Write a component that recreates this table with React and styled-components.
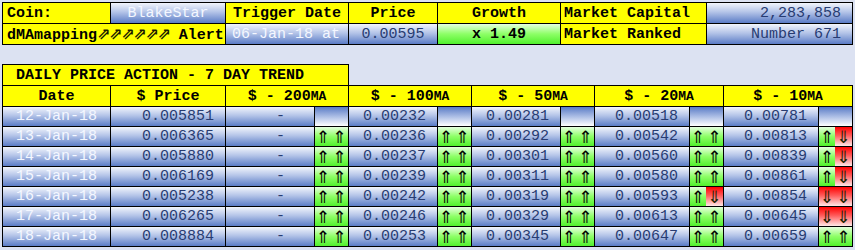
import React from 'react'
import styled, { createGlobalStyle, css } from 'styled-components'

const GlobalStyle = createGlobalStyle`
  body {
    margin: 0;
    background: #dce2f2;
    font-family: "Liberation Mono", "Courier New", monospace;
    font-size: 15px;
  }
`

const tones = {
  yellow: css`background: #ffff00; color: #000;`,
  blue: css`background: linear-gradient(#f2f5fc, #b4c4e8 45%, #5b7cc6);`,
  blueRev: css`background: linear-gradient(#5b7cc6, #b4c4e8 55%, #ffffff);`,
  green: css`background: linear-gradient(#e6ffdf, #8dff66 50%, #52f02e); color: #000;`,
  red: css`background: linear-gradient(#ff0000, #ff5c5c 45%, #ffe8e8);`,
}

const Page = styled.div`
  padding: 2px;
`

const InfoGrid = styled.div`
  display: grid;
  grid-template-columns: 107px 114px 122px 88px 122px 145px 145px;
  grid-auto-rows: 20px;
  gap: 1px;
  padding: 1px;
  background: #000;
  width: max-content;
`

const TrendGrid = styled.div`
  display: grid;
  grid-template-columns: 107px 114px 88px 33px 88px 33px 88px 33px 94px 33px 94px 33px;
  grid-template-rows: 20px;
  grid-auto-rows: 19px;
  gap: 1px;
  padding: 1px;
  background: #000;
  width: max-content;
`

const Cell = styled.div`
  display: flex;
  align-items: center;
  justify-content: ${p => p.$align || 'center'};
  padding: ${p => p.$pad || '0'};
  grid-column: span ${p => p.$span || 1};
  font-weight: ${p => (p.$bold ? 'bold' : 'normal')};
  color: ${p => (p.$light ? '#f4f7ff' : '#283c72')};
  white-space: pre;
  overflow: hidden;
  ${p => tones[p.$tone || 'blue']}
`

const Arrows = styled.span`
  font-family: "DejaVu Sans", sans-serif;
  font-size: 16px;
  font-weight: bold;
  letter-spacing: -1.3px;
  color: #1a1a00;
`

const Small = styled.span`
  font-size: 13px;
`

const Title = styled.div`
  box-sizing: border-box;
  width: 347px;
  height: 21px;
  margin-top: 19px;
  border: 1px solid #000;
  border-bottom: none;
  background: #ffff00;
  padding-left: 13px;
  display: flex;
  align-items: center;
  font-weight: bold;
`

const TrendCell = styled.div`
  display: flex;
`

const Half = styled.div`
  flex: ${p => (p.$first ? '0 0 16px' : '1')};
  display: flex;
  align-items: center;
  justify-content: center;
  font-family: "DejaVu Sans", sans-serif;
  font-size: 17px;
  color: #1c2200;
  ${p => tones[p.$tone]}
`

const rows = [
  ['12-Jan-18', '0.005851', '-', null, '0.00232', null, '0.00281', null, '0.00518', null, '0.00781', null],
  ['13-Jan-18', '0.006365', '-', 'uu', '0.00236', 'uu', '0.00292', 'uu', '0.00542', 'uu', '0.00813', 'ud'],
  ['14-Jan-18', '0.005880', '-', 'uu', '0.00237', 'uu', '0.00301', 'uu', '0.00560', 'uu', '0.00839', 'ud'],
  ['15-Jan-18', '0.006169', '-', 'uu', '0.00239', 'uu', '0.00311', 'uu', '0.00580', 'uu', '0.00861', 'ud'],
  ['16-Jan-18', '0.005238', '-', 'uu', '0.00242', 'uu', '0.00319', 'uu', '0.00593', 'ud', '0.00854', 'dd'],
  ['17-Jan-18', '0.006265', '-', 'uu', '0.00246', 'uu', '0.00329', 'uu', '0.00613', 'uu', '0.00645', 'dd'],
  ['18-Jan-18', '0.008884', '-', 'uu', '0.00253', 'uu', '0.00345', 'uu', '0.00647', 'uu', '0.00659', 'uu'],
]

const Trend = ({ dirs }) => {
  if (!dirs) {
    return <TrendCell><Half $first $tone="blueRev" /><Half $tone="blueRev" /></TrendCell>
  }
  return (
    <TrendCell>
      {dirs.split('').map((d, i) => (
        <Half key={i} $first={i === 0} $tone={d === 'u' ? 'green' : 'red'}>
          {d === 'u' ? '⇑' : '⇓'}
        </Half>
      ))}
    </TrendCell>
  )
}

const headers = ['200', '100', '50', '20', '10']

const App = () => {
  return (
    <Page>
      <GlobalStyle />
      <InfoGrid>
        <Cell $tone="yellow" $bold $align="flex-start" $pad="0 0 0 4px">Coin:</Cell>
        <Cell $light>BlakeStar</Cell>
        <Cell $tone="yellow" $bold>Trigger Date</Cell>
        <Cell $tone="yellow" $bold>Price</Cell>
        <Cell $tone="yellow" $bold>Growth</Cell>
        <Cell $tone="yellow" $bold $align="flex-start" $pad="0 0 0 3px">Market Capital</Cell>
        <Cell $align="flex-end" $pad="0 11px 0 0">2,283,858</Cell>

        <Cell $tone="yellow" $bold $span={2} $align="flex-start" $pad="0 0 0 4px">
          <span>dMAmapping<Arrows>⇗⇗⇗⇗⇗⇗</Arrows> Alert</span>
        </Cell>
        <Cell $light $align="flex-start" $pad="0 0 0 6px">06-Jan-18 at</Cell>
        <Cell>0.00595</Cell>
        <Cell $tone="green" $bold>x 1.49</Cell>
        <Cell $tone="yellow" $bold $align="flex-start" $pad="0 0 0 3px">Market Ranked</Cell>
        <Cell $align="flex-end" $pad="0 11px 0 0">Number 671</Cell>
      </InfoGrid>

      <Title>DAILY PRICE ACTION - 7 DAY TREND</Title>
      <TrendGrid>
        <Cell $tone="yellow" $bold>Date</Cell>
        <Cell $tone="yellow" $bold>$ Price</Cell>
        {headers.map(h => (
          <Cell key={h} $tone="yellow" $bold $span={2}>$ - {h}<Small>MA</Small></Cell>
        ))}

        {rows.map(r => (
          <React.Fragment key={r[0]}>
            <Cell $light>{r[0]}</Cell>
            <Cell $align="flex-end" $pad="0 11px 0 0">{r[1]}</Cell>
            <Cell $pad="0 0 0 21px">{r[2]}</Cell>
            <Trend dirs={r[3]} />
            {[4, 6, 8, 10].map(i => (
              <React.Fragment key={i}>
                <Cell $align="flex-end" $pad="0 11px 0 0">{r[i]}</Cell>
                <Trend dirs={r[i + 1]} />
              </React.Fragment>
            ))}
          </React.Fragment>
        ))}
      </TrendGrid>
    </Page>
  )
}

export default App
